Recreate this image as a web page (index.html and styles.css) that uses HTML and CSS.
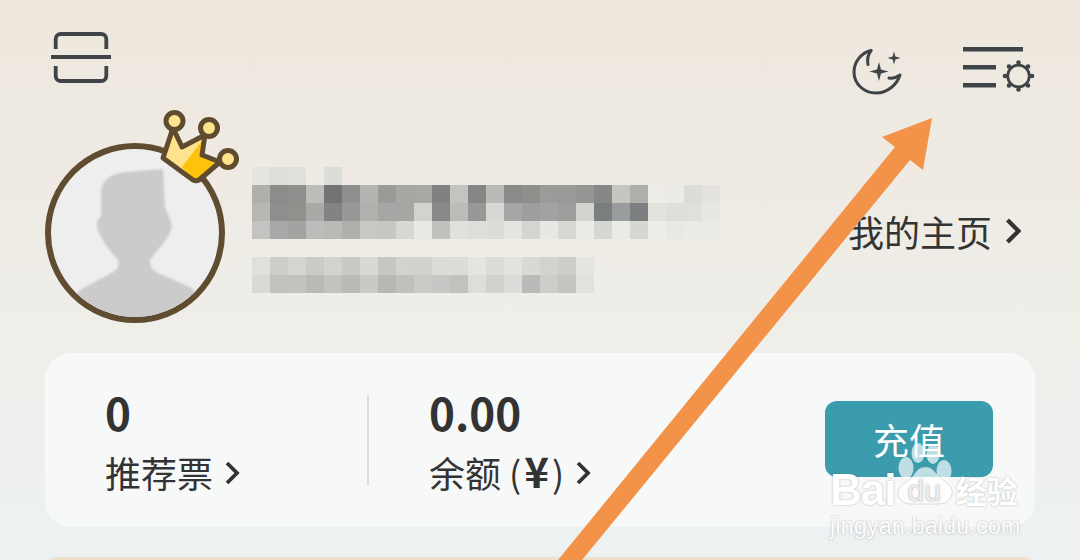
FILE: index.html
```html
<!DOCTYPE html>
<html lang="zh-CN">
<head>
    <meta charset="UTF-8">
    <meta name="viewport" content="width=device-width, initial-scale=1.0">
    <title>我的</title>
    <link rel="stylesheet" href="styles.css">
</head>
<body>
    <div class="page">
        <header class="top-bar">
            <!-- scan -->
            <svg class="icon-scan" width="60" height="52" viewBox="0 0 60 52" fill="none" stroke="#3f4448" stroke-width="3.800">
                <path d="M4.700 17V7a5 5 0 0 1 5-5h40.600a5 5 0 0 1 5 5V17"/>
                <path d="M4.700 34v10a5 5 0 0 0 5 5h40.600a5 5 0 0 0 5-5V34"/>
                <path d="M0 25h60"/>
            </svg>
            <div class="top-right">
                <!-- night mode -->
                <svg class="icon-moon" width="50" height="50" viewBox="0 0 50 50" fill="none" stroke="#3f4448" stroke-width="3" stroke-linecap="round" stroke-linejoin="round">
                    <path d="M19 3.500C9 6 2 15 2 25c0 12 10 21 22 21 11 0 21-8 24-18-3 2-7 4-11 3"/>
                    <path d="M19 3.500c-3 4-4 9-3 14"/>
                    <path fill="#3f4448" stroke="none" d="M27 15l2 7.500 7.500 2-7.500 2-2 7.500-2-7.500-7.500-2 7.500-2zM42 4.500l1.400 5.100 5.100 1.400-5.100 1.400-1.400 5.100-1.400-5.100-5.100-1.400 5.100-1.400z"/>
                </svg>
                <!-- settings -->
                <svg class="icon-settings" width="72" height="46" viewBox="0 0 72 46" fill="none" stroke="#3f4448">
                    <path stroke-width="4.500" d="M0 2.300h60M0 20.300h33M0 38.300h33"/>
                    <circle cx="55.500" cy="29" r="10.800" stroke-width="2.800"/>
                    <g fill="#3f4448" stroke="none">
                        <circle cx="55.500" cy="15.500" r="2.300"/>
                        <circle cx="55.500" cy="42.500" r="2.300"/>
                        <circle cx="42" cy="29" r="2.300"/>
                        <circle cx="69" cy="29" r="2.300"/>
                        <circle cx="46" cy="19.500" r="2.300"/>
                        <circle cx="65" cy="19.500" r="2.300"/>
                        <circle cx="46" cy="38.500" r="2.300"/>
                        <circle cx="65" cy="38.500" r="2.300"/>
                    </g>
                </svg>
            </div>
        </header>

        <section class="profile">
            <div class="avatar-wrap">
                <div class="avatar">
                    <svg width="168" height="168" viewBox="0 0 168 168">
                        <path class="person" fill="#cbcbcb" d="M50 44c0-12 10-20 26-21 12-1 24-2 36-3l2 38c2 6 6 13 7 20-3 12-14 22-22 33 0 7 3 10 8 13l34 15 20 30H8l20-27c12-8 28-14 38-22 2-3 1-6 1-9-8-9-17-19-21-33-1-5 1-8 4-10z"/>
                    </svg>
                </div>
                <!-- vip crown -->
                <svg class="crown" width="80" height="84" viewBox="0 0 80 84" stroke="#5f4c2f" stroke-width="5" stroke-linejoin="round">
                    <path fill="#ffe38c" stroke="none" d="M14 23L4 53l30 22c2 1 4 1 6 0l21-18-18-7 3-20-23 12z"/>
                    <path fill="#fcc30a" stroke="none" d="M46 32l-3 18 18 7-21 18c-2 1-4 1-6 0l-11-13z"/>
                    <path fill="none" d="M14 23L4 53l30 22c2 1 4 1 6 0l21-18-18-7 3-20-23 12z"/>
                    <circle fill="#ffe38c" cx="15.500" cy="16" r="8.500"/>
                    <circle fill="#ffe38c" cx="50" cy="23" r="8.500"/>
                    <circle fill="#ffe38c" cx="69" cy="54" r="8.500"/>
                </svg>
            </div>

            <!-- user name and id, pixelated -->
            <svg class="mosaic" width="468" height="126" viewBox="0 0 26 7" shape-rendering="crispEdges">
                <rect x="0" y="0" fill="#e6e4de"/><rect x="1" y="0" fill="#dfddd8"/><rect x="2" y="0" fill="#dfdfdb"/><rect x="4" y="0" fill="#dcdcd8"/>
                <rect x="0" y="1" fill="#afb0ab"/><rect x="1" y="1" fill="#8b8d8b"/><rect x="2" y="1" fill="#8f908d"/><rect x="3" y="1" fill="#bcbdb8"/><rect x="4" y="1" fill="#717375"/><rect x="5" y="1" fill="#8f8f8f"/><rect x="6" y="1" fill="#b4b5b0"/><rect x="7" y="1" fill="#9a9b99"/><rect x="8" y="1" fill="#a7a8a3"/><rect x="9" y="1" fill="#a8a9a4"/><rect x="10" y="1" fill="#7f8281"/><rect x="11" y="1" fill="#c3c3bf"/><rect x="12" y="1" fill="#858786"/><rect x="13" y="1" fill="#bbbab6"/><rect x="14" y="1" fill="#898b8b"/><rect x="15" y="1" fill="#8e8e8b"/><rect x="16" y="1" fill="#9b9c9a"/><rect x="17" y="1" fill="#999a98"/><rect x="18" y="1" fill="#959693"/><rect x="19" y="1" fill="#858887"/><rect x="20" y="1" fill="#c6c6c1"/><rect x="21" y="1" fill="#aeafaa"/><rect x="22" y="1" fill="#eeece7"/><rect x="23" y="1" fill="#ecebe5"/><rect x="24" y="1" fill="#dcdcd8"/><rect x="25" y="1" fill="#e4e2dc"/>
                <rect x="0" y="2" fill="#b7b8b4"/><rect x="1" y="2" fill="#8d8f8e"/><rect x="2" y="2" fill="#8f918d"/><rect x="3" y="2" fill="#a9aaa8"/><rect x="4" y="2" fill="#818483"/><rect x="5" y="2" fill="#979897"/><rect x="6" y="2" fill="#b0b1ad"/><rect x="7" y="2" fill="#a6a7a5"/><rect x="8" y="2" fill="#a6a7a5"/><rect x="9" y="2" fill="#d2d2ce"/><rect x="10" y="2" fill="#868988"/><rect x="11" y="2" fill="#bbbcb8"/><rect x="12" y="2" fill="#989899"/><rect x="13" y="2" fill="#d7d7d3"/><rect x="14" y="2" fill="#a5a6a5"/><rect x="15" y="2" fill="#9e9e9f"/><rect x="16" y="2" fill="#a1a2a1"/><rect x="17" y="2" fill="#9e9f9d"/><rect x="18" y="2" fill="#d3d3cf"/><rect x="19" y="2" fill="#7a7e7f"/><rect x="20" y="2" fill="#9b9c9d"/><rect x="21" y="2" fill="#7b7f80"/><rect x="22" y="2" fill="#e3e3de"/><rect x="23" y="2" fill="#dfdfda"/><rect x="24" y="2" fill="#dfdfdb"/><rect x="25" y="2" fill="#e8e8e3"/>
                <rect x="0" y="3" fill="#c3c4c2"/><rect x="1" y="3" fill="#a9a9aa"/><rect x="2" y="3" fill="#a3a4a2"/><rect x="3" y="3" fill="#bcbcba"/><rect x="4" y="3" fill="#b9bab6"/><rect x="5" y="3" fill="#afafae"/><rect x="6" y="3" fill="#c8c9c5"/><rect x="7" y="3" fill="#c6c7c3"/><rect x="8" y="3" fill="#d6d8d3"/><rect x="9" y="3" fill="#e8e9e4"/><rect x="10" y="3" fill="#bfc1bc"/><rect x="11" y="3" fill="#e0e1dc"/><rect x="12" y="3" fill="#dcdeda"/><rect x="13" y="3" fill="#dcdcd9"/><rect x="14" y="3" fill="#e4e4e0"/><rect x="15" y="3" fill="#d4d4d0"/><rect x="16" y="3" fill="#e6e8e3"/><rect x="17" y="3" fill="#d6d8d3"/><rect x="18" y="3" fill="#ebece7"/><rect x="19" y="3" fill="#d5d7d2"/><rect x="20" y="3" fill="#e9ebe6"/><rect x="21" y="3" fill="#d5d7d2"/><rect x="22" y="3" fill="#ecece8"/><rect x="23" y="3" fill="#e8e8e4"/><rect x="24" y="3" fill="#eaeae6"/><rect x="25" y="3" fill="#ecece7"/>
                <rect x="0" y="5" fill="#dfdfdc"/><rect x="1" y="5" fill="#cdcdc9"/><rect x="2" y="5" fill="#d4d5d1"/><rect x="3" y="5" fill="#c9cbc6"/><rect x="4" y="5" fill="#d1d3cd"/><rect x="5" y="5" fill="#c9c9c5"/><rect x="6" y="5" fill="#d8d8d4"/><rect x="7" y="5" fill="#c5c7c2"/><rect x="8" y="5" fill="#d2d2cf"/><rect x="9" y="5" fill="#d1d1cd"/><rect x="10" y="5" fill="#dbdbd8"/><rect x="11" y="5" fill="#dcdcd8"/><rect x="12" y="5" fill="#e4e4e0"/><rect x="13" y="5" fill="#dbdbd8"/><rect x="14" y="5" fill="#e1e4de"/><rect x="15" y="5" fill="#d7d9d3"/><rect x="16" y="5" fill="#d2d2cf"/><rect x="17" y="5" fill="#cdcdc9"/><rect x="18" y="5" fill="#e4e4e0"/>
                <rect x="0" y="6" fill="#d8dad6"/><rect x="1" y="6" fill="#c0c2bd"/><rect x="2" y="6" fill="#c2c2be"/><rect x="3" y="6" fill="#b9b9b7"/><rect x="4" y="6" fill="#c1c3be"/><rect x="5" y="6" fill="#b9bbb5"/><rect x="6" y="6" fill="#c9c9c5"/><rect x="7" y="6" fill="#b7b7b5"/><rect x="8" y="6" fill="#bfc1bc"/><rect x="9" y="6" fill="#cbcbc7"/><rect x="10" y="6" fill="#c6c6c4"/><rect x="11" y="6" fill="#c1c1bd"/><rect x="12" y="6" fill="#dddedb"/><rect x="13" y="6" fill="#d1d1ce"/><rect x="14" y="6" fill="#dcddda"/><rect x="15" y="6" fill="#bababa"/><rect x="16" y="6" fill="#cdcdca"/><rect x="17" y="6" fill="#c4c5c0"/><rect x="18" y="6" fill="#e1e2de"/>
            </svg>

            <a class="home-link">我的主页
                <svg width="16" height="26" viewBox="0 0 16 26" fill="none" stroke="#333" stroke-width="4.200"><path d="M2.500 2l11 11-11 11"/></svg>
            </a>
        </section>

        <section class="wallet">
            <div class="stat stat-votes">
                <div class="stat-num">0</div>
                <div class="stat-label">推荐票
                    <svg width="15" height="24" viewBox="0 0 15 24" fill="none" stroke="#333" stroke-width="3.800"><path d="M2 2l10 10-10 10"/></svg>
                </div>
            </div>
            <div class="divider"></div>
            <div class="stat">
                <div class="stat-num">0.00</div>
                <div class="stat-label"><span>余额 (<b class="yen">¥</b>)</span>
                    <svg width="15" height="24" viewBox="0 0 15 24" fill="none" stroke="#333" stroke-width="3.800"><path d="M2 2l10 10-10 10"/></svg>
                </div>
            </div>
            <button class="recharge">充值</button>
        </section>

        <div class="next-card"></div>
    </div>

    <!-- annotation arrow -->
    <svg class="arrow" width="1080" height="560" viewBox="0 0 1080 560">
        <path fill="#f3934a" d="M932 118L882 137 895 147 558 560H582L910 160 923 170z"/>
    </svg>

    <!-- baidu watermark -->
    <div class="watermark">
        <div class="wm-row">
            <span class="wm-bai">Bai</span>
            <span class="wm-du">
                <svg class="wm-paw" width="60" height="62" viewBox="0 0 60 62" fill="#fff" fill-opacity=".68">
                    <ellipse cx="9" cy="25" rx="7.500" ry="11"/>
                    <ellipse cx="21" cy="10" rx="6.500" ry="10"/>
                    <ellipse cx="36" cy="11" rx="6.500" ry="10"/>
                    <ellipse cx="47" cy="28" rx="7.500" ry="11"/>
                    <path stroke="#9a9a9a" stroke-opacity=".35" d="M28 24c9 0 11 8 17 12 8 5 11 10 10 15-1 7-8 10-14 10H14c-8 0-13-5-13-11 0-5 4-9 11-13 6-4 7-13 16-13z"/>
                </svg>
                <b>du</b>
            </span>
            <span class="wm-jy">经验</span>
        </div>
        <div class="wm-url">jingyan.baidu.com</div>
    </div>
</body>
</html>
```

FILE: styles.css
```css
html, body {
    margin: 0;
    height: 560px;
    overflow: hidden;
}
body {
    position: relative;
    font-family: "Noto Sans CJK SC", "Noto Sans", sans-serif;
    color: #333;
}
.page {
    height: 560px;
    box-sizing: border-box;
    padding: 0 45px;
    overflow: hidden;
    background: linear-gradient(180deg, #eee7dd 0%, #efeee9 60%, #edf1f2 95%);
}

.top-bar {
    display: flex;
    justify-content: space-between;
    height: 143px;
    box-sizing: border-box;
    padding-top: 32px;
}
.icon-scan {
    margin-left: 6px;
}
.top-right {
    display: flex;
    align-items: flex-start;
}
.icon-moon {
    margin-top: 15px;
    margin-right: 61px;
}
.icon-settings {
    margin-top: 15px;
}

.profile {
    display: flex;
    height: 180px;
}
.avatar-wrap {
    position: relative;
    width: 180px;
    height: 180px;
    flex-shrink: 0;
}
.avatar {
    box-sizing: border-box;
    width: 180px;
    height: 180px;
    border: 6px solid #604c30;
    border-radius: 50%;
    background: #eeeeee;
    overflow: hidden;
}
.avatar svg {
    display: block;
}
.person {
    filter: blur(1px);
}
.crown {
    position: absolute;
    left: 114px;
    top: -38px;
}
.mosaic {
    margin: 24px 0 0 27px;
}
.mosaic rect {
    width: 1px;
    height: 1px;
}
.home-link {
    margin-left: auto;
    margin-right: 14px;
    margin-bottom: 4px;
    align-self: center;
    display: flex;
    align-items: center;
    gap: 13px;
    font-size: 36px;
    line-height: 50px;
}

.wallet {
    display: flex;
    align-items: center;
    height: 174px;
    box-sizing: border-box;
    margin-top: 30px;
    padding: 0 42px 0 60px;
    background: #f7f9f8;
    border-radius: 26px;
}
.stat {
    padding-top: 2px;
}
.stat-votes {
    width: 262px;
}
.stat-num {
    font-size: 44px;
    font-weight: 700;
    line-height: 52px;
}
.stat-label {
    display: flex;
    align-items: center;
    gap: 12px;
    margin-top: 9px;
    font-size: 36px;
    line-height: 50px;
}
.stat-label svg {
    margin-top: 2px;
}
.yen {
    padding: 0 3px;
    font-size: 42px;
    font-weight: 700;
    line-height: 1;
}
.divider {
    width: 2px;
    height: 91px;
    margin-right: 60px;
    background: #dcdedd;
}
.recharge {
    margin-left: auto;
    width: 168px;
    height: 76px;
    margin-bottom: 2px;
    border: none;
    border-radius: 12px;
    background: #3a9cad;
    color: #fff;
    font-family: inherit;
    font-size: 36px;
}
.next-card {
    margin-top: 30px;
    height: 60px;
    background: #efdfcf;
    border-radius: 12px;
}

.arrow {
    position: absolute;
    left: 0;
    top: 0;
}

.watermark {
    position: absolute;
    left: 830px;
    top: 470px;
    width: 200px;
    color: #fff;
}
.wm-row {
    display: flex;
    align-items: center;
    height: 40px;
}
.wm-bai, .wm-du b, .wm-url {
    font-family: "Liberation Sans", sans-serif;
}
.wm-bai {
    font-size: 44px;
    font-weight: 700;
    letter-spacing: -1px;
    text-shadow: 0 0 2px rgba(110, 110, 110, .55);
}
.wm-du {
    position: relative;
    width: 58px;
    height: 40px;
    margin-left: 5px;
}
.wm-paw {
    position: absolute;
    left: -3px;
    top: -27px;
}
.wm-du b {
    position: absolute;
    left: 7px;
    top: 6px;
    font-size: 30px;
    font-weight: 400;
    line-height: 30px;
    color: #eceeee;
    text-shadow: 0 0 2px rgba(90, 90, 90, .6);
}
.wm-jy {
    margin-left: -3px;
    font-size: 31px;
    font-weight: 700;
    line-height: 40px;
    text-shadow: 0 0 2px rgba(110, 110, 110, .55);
}
.wm-url {
    margin-top: 2px;
    font-size: 23px;
    line-height: 28px;
    letter-spacing: .3px;
    text-shadow: 0 0 2px rgba(110, 110, 110, .6);
}
```
